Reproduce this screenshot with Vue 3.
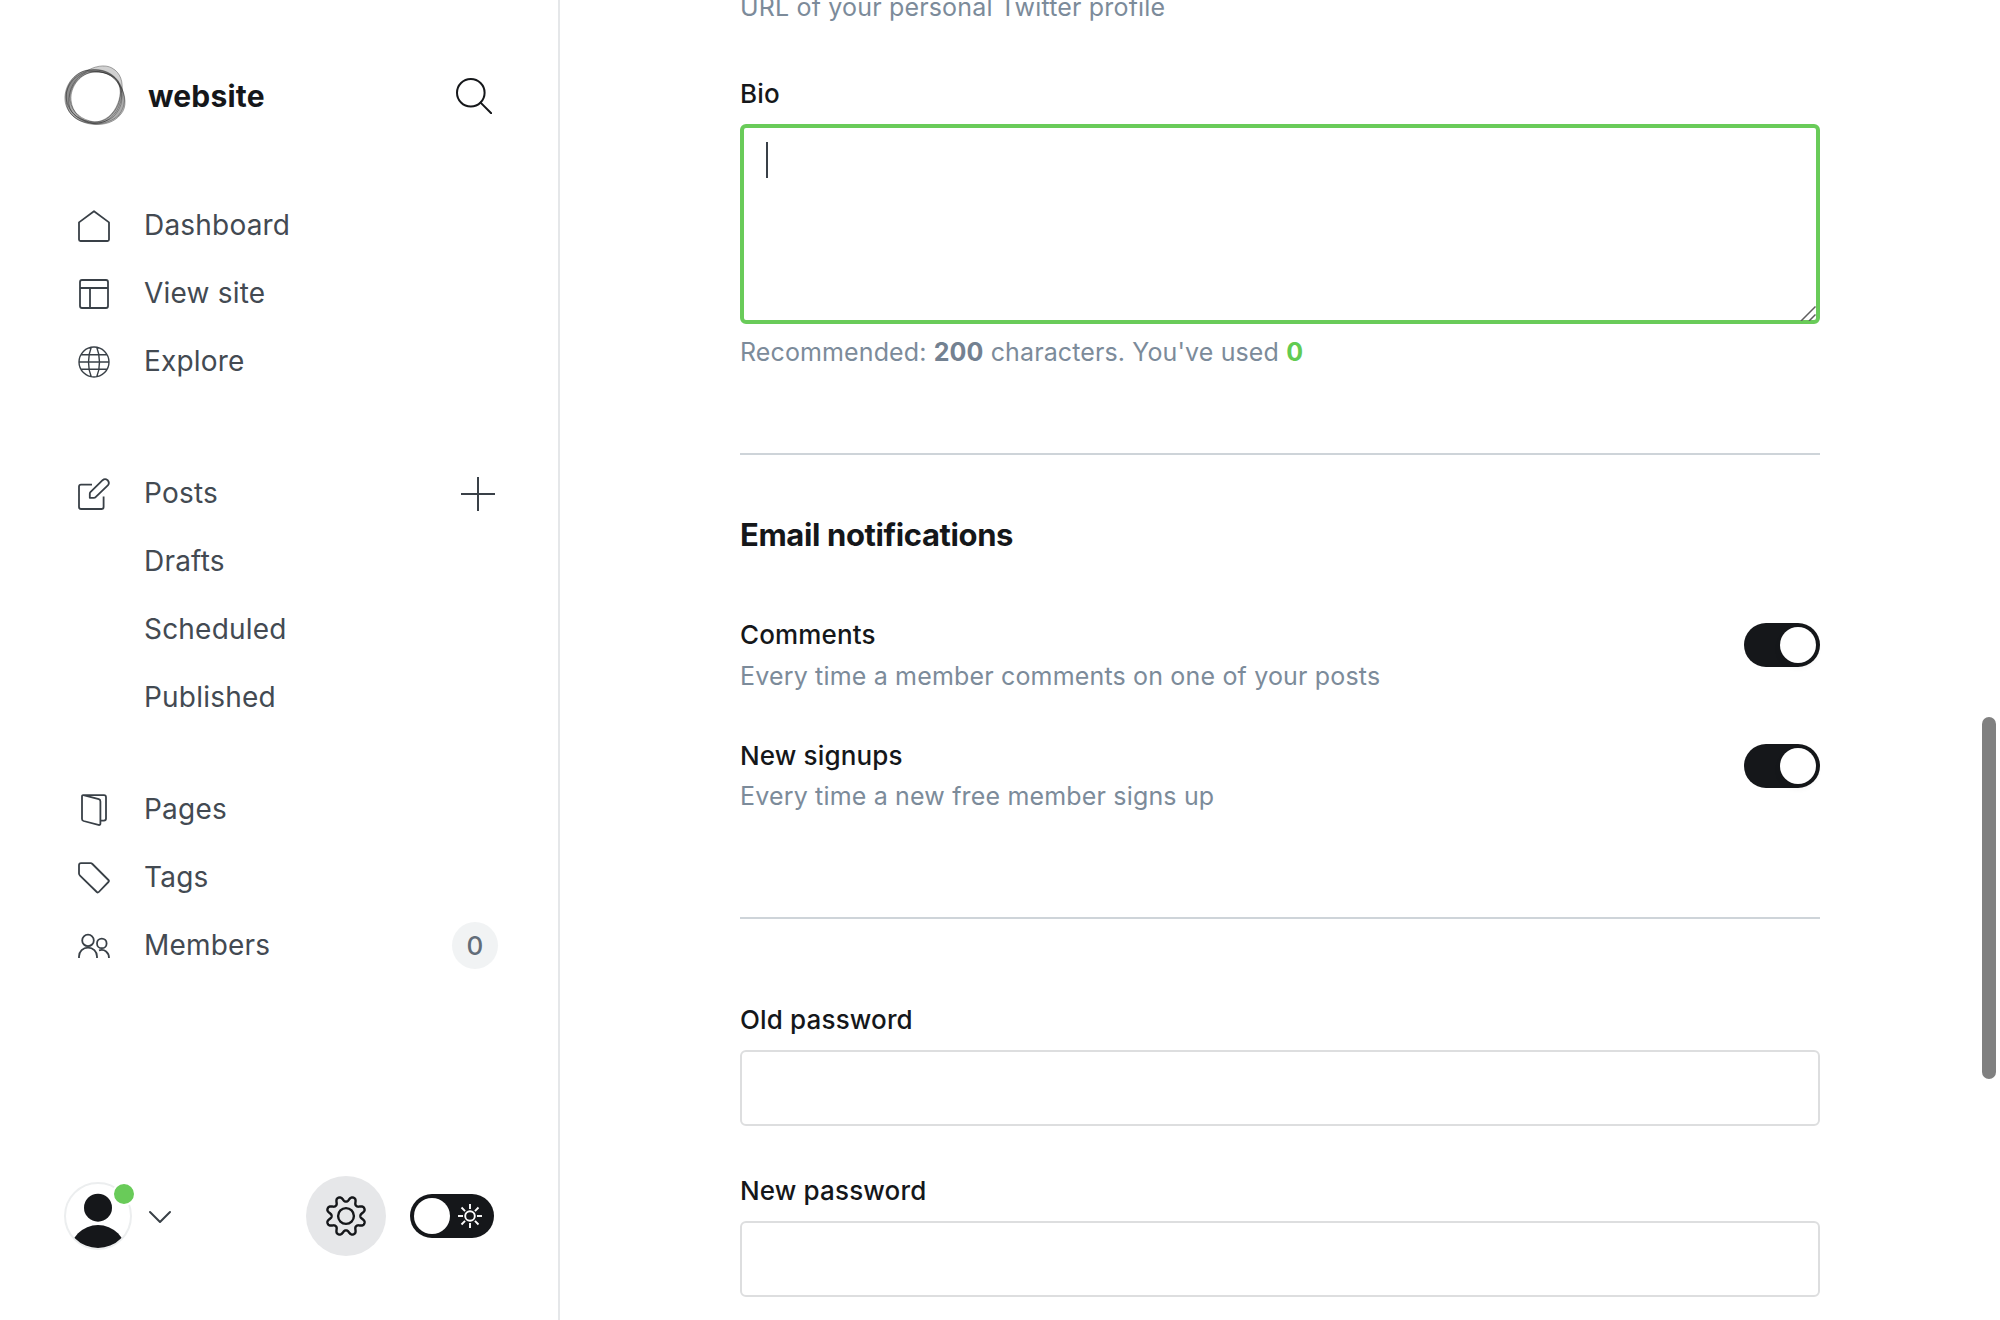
<script setup>
const mainLinks = [
  { label: 'Dashboard', icon: 'home' },
  { label: 'View site', icon: 'layout' },
  { label: 'Explore', icon: 'globe' },
]
const postLinks = ['Drafts', 'Scheduled', 'Published']
const contentLinks = [
  { label: 'Pages', icon: 'pages' },
  { label: 'Tags', icon: 'tag' },
  { label: 'Members', icon: 'members', count: 0 },
]
const icons = {
  home: 'M1 12.4V29.5Q1 31 2.5 31H29.5Q31 31 31 29.5V12.4L16 1.2Z',
  layout: 'M4 2H28Q30 2 30 4V28Q30 30 28 30H4Q2 30 2 28V4Q2 2 4 2ZM2 10H30M12 10V30',
  globe: 'M16 1A15 15 0 1 1 16 31A15 15 0 1 1 16 1M13.2 1.4C9.6 10 9.6 22 13.2 30.6M18.8 1.4C22.4 10 22.4 22 18.8 30.6M1 16H31M3.2 8.8H28.8M3.2 23.2H28.8',
  edit: 'M14 6.6H3Q1 6.6 1 8.6V29Q1 31 3 31H23.6Q25.6 31 25.6 29V18.4M12.4 14.2L24.6 2.2Q27 .1 29.6 2.2Q32 5 29.8 7.4L17.6 19.2Q16.8 19.8 15.8 19.8H11.8V15.8Q11.8 14.8 12.4 14.2Z',
  pages: 'M5.6 1.2H26Q28 1.2 28 3.2V24.6Q28 26.6 26 26.6H22.6M5.4 1.1L20.8 5.2Q22.4 5.7 22.4 7.4V29.4Q22.4 31.4 20.4 30.9L5.6 27Q4 26.5 4 25V2.6Q4 .8 5.4 1.1Z',
  tag: 'M3 1.2H12.6Q13.6 1.2 14.4 2L30.4 18Q31.4 19 30.4 20L20.8 30Q19.8 31 18.8 30L2 13.6Q1 12.6 1 11.6V3.2Q1 1.2 3 1.2Z',
  members: 'M10 4.6A5.8 5.8 0 1 1 10 16.2A5.8 5.8 0 1 1 10 4.6M1 28V26.6A9 9 0 0 1 19 26.6V28M23.8 8.6A4.8 4.8 0 1 1 23.8 18.2A4.8 4.8 0 1 1 23.8 8.6M21 20.4C26.6 18.6 31 22.4 31 28',
}
const notifications = [
  { title: 'Comments', text: 'Every time a member comments on one of your posts' },
  { title: 'New signups', text: 'Every time a new free member signs up' },
]
const passwords = ['Old password', 'New password']

// Eight-toothed outline, sampled around the circle
const gearPath = 'M' + Array.from({ length: 240 }, (_, i) => {
  const a = (i / 240) * Math.PI * 2
  const r = 17.1 - 2.7 * Math.tanh(1.3 * Math.cos(8 * a)) / Math.tanh(1.3)
  return (20 + r * Math.cos(a)).toFixed(2) + ' ' + (20 + r * Math.sin(a)).toFixed(2)
}).join('L') + 'Z'
const rays = [0, 45, 90, 135, 180, 225, 270, 315]
</script>

<template>
  <div class="app">
    <aside class="sidebar">
      <header class="brand">
        <svg class="logo" viewBox="0 0 72 72" width="72" height="72">
          <path d="M5 40C4 24 16 11 29 10C42 9 54 13 60 25C66 36 67 47 61 54C54 63 44 64.5 36 64.5C18 64 6 53 5 40ZM11 40C10 26 21 13 34 12C47 11 57 18 61 29C64 41 60 50 53 57C46 62 40 63 34 63C21 62 12 52 11 40Z" />
          <path d="M7 46C3 29 12 17 25 12C34 6 45 4 52 8C61 13 63 22 62 32C62 46 54 60 40 63C25 65 10 59 7 46ZM9 44C8 30 14 18 27 12C37 10 50 13 56 19C62 26 61 35 58 43C54 54 45 62 34 62C21 61 10 55 9 44Z" />
          <path d="M6 35C7 22 18 10 31 10C43 8 55 14 60 24C66 36 66 46 59 55C53 61 44 64 35 64C19 62 6 51 6 35ZM10 36C12 22 23 12 35 12C46 11 57 17 60 28C62 40 57 50 49 57C43 62 36 63 30 61C18 58 9 48 10 36Z" />
        </svg>
        <span class="site">website</span>
        <svg class="search" viewBox="0 0 36 36" width="36" height="36">
          <circle cx="14.8" cy="14.8" r="13.8" />
          <path d="M24.6 24.6L35.2 35.2" />
        </svg>
      </header>

      <nav>
        <ul class="group">
          <li v-for="l in mainLinks" :key="l.label">
            <svg class="icon" :class="l.icon" viewBox="0 0 32 32"><path :d="icons[l.icon]" /></svg>
            <span>{{ l.label }}</span>
          </li>
        </ul>
        <ul class="group posts">
          <li>
            <svg class="icon" viewBox="0 0 32 32"><path :d="icons.edit" /></svg>
            <span>Posts</span>
            <svg class="plus" viewBox="0 0 34 34" width="34" height="34"><path d="M0 17H34M17 0V34" /></svg>
          </li>
          <li v-for="p in postLinks" :key="p" class="sub">{{ p }}</li>
        </ul>
        <ul class="group content-links">
          <li v-for="l in contentLinks" :key="l.label">
            <svg class="icon" viewBox="0 0 32 32"><path :d="icons[l.icon]" /></svg>
            <span>{{ l.label }}</span>
            <span v-if="l.count !== undefined" class="count">{{ l.count }}</span>
          </li>
        </ul>
      </nav>

      <footer class="account">
        <div class="avatar">
          <svg viewBox="0 0 64 64" width="64" height="64">
            <circle cx="32" cy="23.7" r="14" />
            <circle cx="32" cy="69.2" r="28.2" />
          </svg>
          <i class="status"></i>
        </div>
        <svg class="chevron" viewBox="0 0 24 14" width="24" height="14"><path d="M2 2L12 12L22 2" /></svg>
        <div class="settings">
          <svg viewBox="0 0 40 40" width="40" height="40">
            <path :d="gearPath" />
            <circle cx="20" cy="20" r="7.9" />
          </svg>
        </div>
        <div class="theme">
          <i class="knob"></i>
          <svg viewBox="0 0 24 24" width="24" height="24">
            <circle cx="12" cy="12" r="4.8" />
            <path v-for="r in rays" :key="r" d="M12 0V5" :transform="`rotate(${r} 12 12)`" />
          </svg>
        </div>
      </footer>
    </aside>

    <main class="content">
      <p class="help">URL of your personal Twitter profile</p>
      <label class="label bio">Bio</label>
      <div class="textarea">
        <i class="caret"></i>
        <svg class="grip" viewBox="0 0 16 16" width="16" height="16"><path d="M1 16L15.5 1.5M9 16L15.5 9.5" /></svg>
      </div>
      <p class="help used">Recommended: <b>200</b> characters. You've used <b class="ok">0</b></p>
      <hr class="first">
      <h4>Email notifications</h4>
      <section class="notifications">
        <div v-for="n in notifications" :key="n.title" class="notification">
          <div>
            <div class="label">{{ n.title }}</div>
            <p class="help">{{ n.text }}</p>
          </div>
          <div class="switch"><i class="knob"></i></div>
        </div>
      </section>
      <hr class="second">
      <section class="passwords">
        <div v-for="p in passwords" :key="p">
          <label class="label">{{ p }}</label>
          <div class="input"></div>
        </div>
      </section>
    </main>
    <div class="scrollbar"></div>
  </div>
</template>

<style>
html, body { margin: 0; overflow: hidden; background: #fff; }
</style>

<style scoped>
.app {
  position: relative;
  display: flex;
  width: 2000px;
  height: 1320px;
  overflow: hidden;
  box-sizing: border-box;
  font-family: Inter, "Liberation Sans", sans-serif;
  color: #15171a;
  background: #fff;
}
.app *, .app *::before { box-sizing: border-box; }
ul, p, h4 { margin: 0; padding: 0; }
ul { list-style: none; }
i { display: block; }
svg { display: block; flex: none; fill: none; }

.sidebar {
  display: flex;
  flex-direction: column;
  width: 560px;
  height: 1320px;
  flex: none;
  border-right: 2px solid #e5e7e9;
}
.brand { display: flex; align-items: center; height: 72px; margin: 60px 66px 0 60px; }
.logo {
  fill: #000;
  fill-opacity: .18;
  fill-rule: evenodd;
  stroke: #111;
  stroke-width: .6;
  stroke-opacity: .6;
}
.site { margin: -1px auto 0 16px; font-size: 30px; font-weight: 700; letter-spacing: .2px; }
.search { stroke: #15171a; stroke-width: 2; stroke-linecap: round; }
nav { margin-top: 59px; }
.group li {
  display: flex;
  align-items: center;
  height: 68px;
  padding: 0 60px 0 78px;
  font-size: 28px;
  line-height: 68px;
  letter-spacing: .2px;
  color: #434a52;
}
.group li.sub { padding-left: 144px; }
.posts { margin-top: 64px; }
.content-links { margin-top: 44px; }
.icon {
  width: 32px;
  height: 32px;
  margin: 2px 34px 0 0;
  stroke: #394047;
  stroke-width: 1.8;
  stroke-linejoin: round;
}
.icon.globe { stroke-width: 1.4; }
.plus { margin: 1px 3px 0 auto; stroke: #394047; stroke-width: 2; }
.count {
  width: 46px;
  height: 47px;
  margin: 1px 0 0 auto;
  border-radius: 50%;
  background: #f1f3f4;
  color: #626d79;
  font-size: 26px;
  font-weight: 500;
  line-height: 47px;
  text-align: center;
}

.account { display: flex; align-items: center; height: 80px; margin: auto 64px 64px 64px; }
.avatar { position: relative; width: 68px; height: 68px; border: 2px solid #eceeef; border-radius: 50%; }
.avatar svg { border-radius: 50%; fill: #15171a; }
.status {
  position: absolute;
  top: -2px;
  right: -6px;
  width: 24px;
  height: 24px;
  border: 2px solid #fff;
  border-radius: 50%;
  background: #69cb59;
}
.chevron { margin: 2px 0 0 16px; stroke: #394047; stroke-width: 2; stroke-linecap: round; stroke-linejoin: round; }
.settings {
  display: flex;
  align-items: center;
  justify-content: center;
  width: 80px;
  height: 80px;
  margin-left: auto;
  border-radius: 50%;
  background: #e6e7e9;
}
.settings svg { stroke: #15171a; stroke-width: 2.4; stroke-linejoin: round; }
.theme {
  display: flex;
  align-items: center;
  width: 84px;
  height: 44px;
  margin-left: 24px;
  padding-left: 4px;
  border-radius: 22px;
  background: #15171a;
}
.theme svg { margin-left: 8px; stroke: #fff; stroke-width: 1.9; }
.knob { width: 36px; height: 36px; border-radius: 50%; background: #fff; }

.content { width: 1080px; margin: -8px 0 0 180px; }
.help { font-size: 25px; line-height: 30px; letter-spacing: .17px; color: #7c8b9a; white-space: nowrap; }
.help b { font-weight: 700; color: #738191; }
.help b.ok { color: #62cb52; }
.label { display: block; font-size: 26px; line-height: 32px; font-weight: 500; letter-spacing: .15px; }
.bio { margin-top: 56px; }
.textarea {
  position: relative;
  height: 200px;
  margin-top: 14px;
  padding: 14px 22px;
  border: 4px solid #69cb59;
  border-radius: 6px;
}
.caret { width: 2px; height: 36px; background: #394047; }
.grip { position: absolute; right: 0; bottom: -1px; stroke: #5f5f5f; stroke-width: 1.5; }
.used { margin-top: 13px; letter-spacing: .12px; }
hr { height: 2px; border: 0; background: #ced4d9; }
.first { margin: 86px 0 61px; }
h4 { font-size: 31px; line-height: 38px; font-weight: 700; letter-spacing: -.38px; }
.notifications { display: flex; flex-direction: column; gap: 49px; margin-top: 65px; }
.notification { display: flex; justify-content: space-between; height: 72px; }
.notification .help { margin-top: 10px; }
.notification + .notification .help { margin-top: 9px; }
.switch {
  display: flex;
  justify-content: flex-end;
  width: 76px;
  height: 44px;
  margin-top: 4px;
  padding: 4px;
  border-radius: 22px;
  background: #15171a;
}
.switch .knob { box-shadow: 0 4px 6px rgba(0, 0, 0, .08); }
.second { margin: 105px 0 85px; }
.passwords { display: flex; flex-direction: column; gap: 49px; }
.input { height: 76px; margin-top: 14px; border: 2px solid #dddedf; border-radius: 6px; }

.scrollbar {
  width: 14px;
  height: 362px;
  margin: 717px 4px 0 auto;
  border-radius: 7px;
  background: #808080;
}
</style>
